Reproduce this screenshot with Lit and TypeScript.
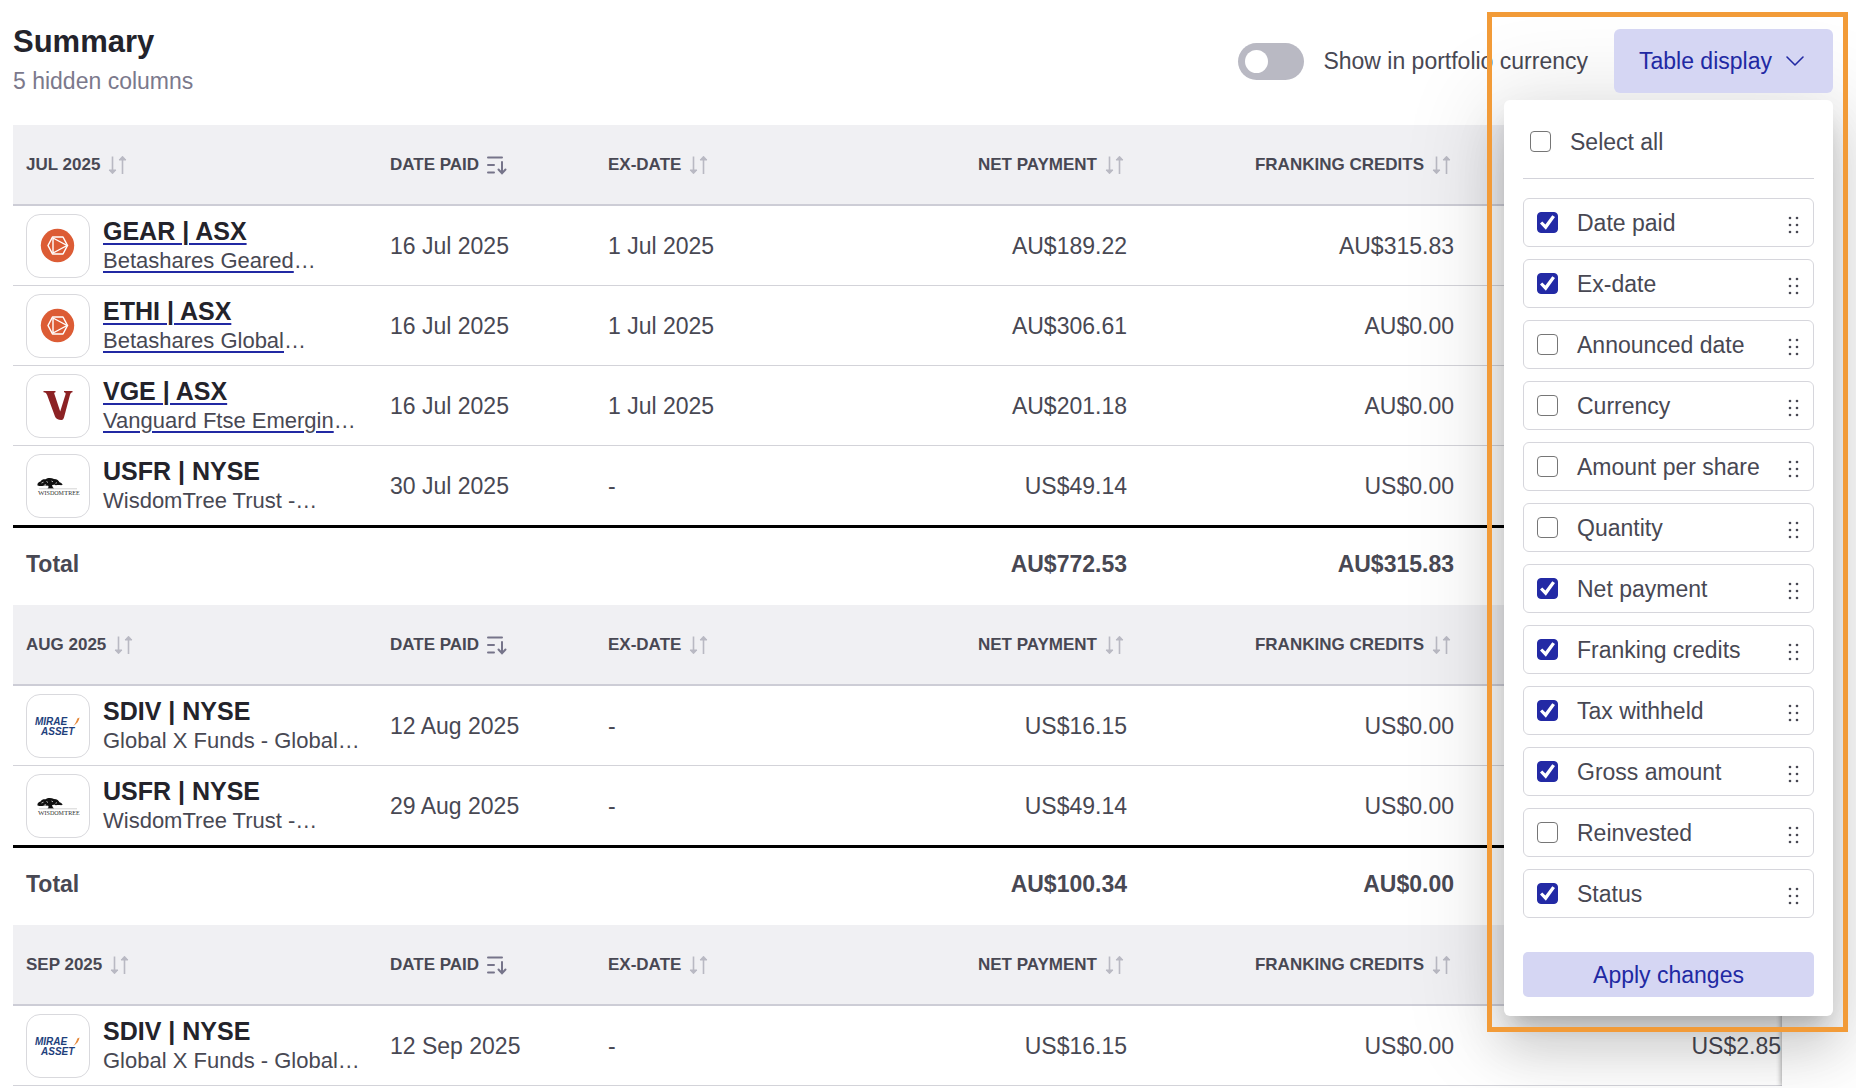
import { LitElement, html, css, svg } from "lit";
import { customElement, state } from "lit/decorators.js";

type Brand = "betashares" | "vanguard" | "wisdomtree" | "mirae";

interface Holding {
  brand: Brand;
  code: string;
  name: string;
  linked?: boolean;
  paid: string;
  exDate: string;
  net: string;
  franking: string;
  gross?: string;
}

interface Month {
  label: string;
  rows: Holding[];
  total?: { net: string; franking: string };
}

const MONTHS: Month[] = [
  {
    label: "JUL 2025",
    rows: [
      { brand: "betashares", code: "GEAR | ASX", name: "Betashares Geared", linked: true, paid: "16 Jul 2025", exDate: "1 Jul 2025", net: "AU$189.22", franking: "AU$315.83" },
      { brand: "betashares", code: "ETHI | ASX", name: "Betashares Global", linked: true, paid: "16 Jul 2025", exDate: "1 Jul 2025", net: "AU$306.61", franking: "AU$0.00" },
      { brand: "vanguard", code: "VGE | ASX", name: "Vanguard Ftse Emergin", linked: true, paid: "16 Jul 2025", exDate: "1 Jul 2025", net: "AU$201.18", franking: "AU$0.00" },
      { brand: "wisdomtree", code: "USFR | NYSE", name: "WisdomTree Trust -", paid: "30 Jul 2025", exDate: "-", net: "US$49.14", franking: "US$0.00" },
    ],
    total: { net: "AU$772.53", franking: "AU$315.83" },
  },
  {
    label: "AUG 2025",
    rows: [
      { brand: "mirae", code: "SDIV | NYSE", name: "Global X Funds - Global", paid: "12 Aug 2025", exDate: "-", net: "US$16.15", franking: "US$0.00" },
      { brand: "wisdomtree", code: "USFR | NYSE", name: "WisdomTree Trust -", paid: "29 Aug 2025", exDate: "-", net: "US$49.14", franking: "US$0.00" },
    ],
    total: { net: "AU$100.34", franking: "AU$0.00" },
  },
  {
    label: "SEP 2025",
    rows: [
      { brand: "mirae", code: "SDIV | NYSE", name: "Global X Funds - Global", paid: "12 Sep 2025", exDate: "-", net: "US$16.15", franking: "US$0.00", gross: "US$2.85" },
    ],
  },
];

const LOGOS: Record<Brand, unknown> = {
  betashares: svg`
    <circle cx="30.500" cy="30.500" r="16.700" fill="#dc5c35"/>
    <path d="M25.500 22h10.500L40.500 30.500l-4.500 8.500H25.500L21 30.500z" fill="none" stroke="#fff" stroke-width="1.500" stroke-linejoin="round"/>
    <path d="M26 22.500v16M26 23l14 7.500-14 7.500" fill="none" stroke="#fff" stroke-width="1.400"/>`,
  vanguard: svg`
    <path d="M16.500 16h12v1.200c-1.200.2-1.500.7-1.100 1.900l5.800 17.400 5.300-17c.4-1.400 0-2-1.500-2.300V16h8.500v1.200c-1.400.3-1.900.9-2.400 2.400L37 42.500c-.6 1.900-1.500 2.700-2.800 2.500-3-.3-5.400-1.200-6.200-3.500L20.200 20.300c-.8-2.100-1.500-2.900-3.700-3.100z" fill="#8c2224"/>`,
  wisdomtree: svg`
    <path d="M10.500 30.500c-.5-2 1-3.500 3-4 1-2 3-2.500 5-2.300 2-1.700 6-1.700 8.500-.2 3 .2 5 1.700 5.500 3.300 2 .6 3 1.800 3 2.700-2 .4-3-.3-5 0-2 .5-4-.5-5.500.2l.8 2 1.200 1.300h-6.500l1.200-1.500-.7-1.500c-1.500.5-3-.3-4.500.2-2 .8-4 .3-6-.2z" fill="#111"/>
    <path d="M14.500 28l2-.8M19.500 26.500l1.500 1M24.500 26l1.500.8M28.500 28.300l1.500-.6M17.500 29.800h1.600M26.500 30h1.400" stroke="#fff" stroke-width=".7"/>
    <path d="M12 33.800h38" stroke="#aaa" stroke-width=".5"/>
    <text x="11" y="40" font-family="Liberation Serif, serif" font-size="7" fill="#333">W<tspan font-size="6">ISDOM</tspan>T<tspan font-size="6">REE</tspan></text>`,
  mirae: svg`
    <text x="8" y="30" font-family="Liberation Sans, sans-serif" font-size="10" font-weight="700" font-style="italic" fill="#1e3f7c">MIRAE</text>
    <text x="14" y="40" font-family="Liberation Sans, sans-serif" font-size="10" font-weight="700" font-style="italic" fill="#1e3f7c">ASSET</text>
    <path d="M52.500 22.500c-.2 3-2.500 6.500-6.500 8.700 2.300-2.300 3.500-5 4.300-7.700z" fill="#e58a3c"/>`,
};

@customElement("app-root")
export class AppRoot extends LitElement {
  @state() private columns = [
    { label: "Date paid", on: true },
    { label: "Ex-date", on: true },
    { label: "Announced date", on: false },
    { label: "Currency", on: false },
    { label: "Amount per share", on: false },
    { label: "Quantity", on: false },
    { label: "Net payment", on: true },
    { label: "Franking credits", on: true },
    { label: "Tax withheld", on: true },
    { label: "Gross amount", on: true },
    { label: "Reinvested", on: false },
    { label: "Status", on: true },
  ];

  static styles = css`
    :host {
      display: block;
      height: 100vh;
      overflow: hidden;
      background: #fff;
      color: #484853;
      font-family: "Liberation Sans", Arial, sans-serif;
      font-size: 23px;
      line-height: 28px;
    }
    * { box-sizing: border-box; }
    button { font: inherit; border: 0; cursor: pointer; }
    .top {
      display: flex;
      justify-content: space-between;
      align-items: flex-start;
      height: 125px;
      padding: 24px 23px 0 13px;
    }
    h1 { margin: 0; font-size: 31px; line-height: 36px; font-weight: 700; color: #23232b; }
    .hidden-count { margin: 7px 0 0; color: #7b798c; }
    .actions { display: flex; align-items: center; gap: 26px; padding-top: 5px; }
    .toggle { display: flex; align-items: center; gap: 19px; }
    .switch {
      appearance: none;
      width: 66px;
      height: 37px;
      margin: 0;
      padding: 7px;
      border-radius: 19px;
      background: #b9b9c3;
    }
    .switch::before {
      content: "";
      display: block;
      width: 23px;
      height: 23px;
      border-radius: 50%;
      background: #fff;
    }
    .switch:checked::before { margin-left: auto; }
    .menu { position: relative; }
    .menu-button {
      position: relative;
      z-index: 3;
      display: flex;
      align-items: center;
      justify-content: space-between;
      width: 219px;
      height: 64px;
      padding: 0 28px 0 25px;
      border-radius: 6px;
      background: #d5d6f3;
      color: #2129a3;
    }
    .panel {
      position: absolute;
      z-index: 2;
      top: 71px;
      right: 0;
      width: 329px;
      padding: 19px;
      border-radius: 6px;
      background: #fff;
      box-shadow: 0 14px 20px -9px rgba(0, 0, 0, 0.2), 0 30px 48px 4px rgba(0, 0, 0, 0.12), 0 12px 90px 16px rgba(0, 0, 0, 0.12);
    }
    .panel::after {
      content: "";
      position: absolute;
      inset: -88px -15px -16px -17px;
      border: 5px solid #f29b38;
      pointer-events: none;
    }
    .all {
      display: flex;
      align-items: center;
      gap: 19px;
      height: 60px;
      padding: 0 7px 14px;
      border-bottom: 1px solid #d3d3da;
    }
    .list { display: grid; gap: 12px; margin: 19px 0 34px; padding: 0; list-style: none; }
    .item {
      display: flex;
      align-items: center;
      height: 49px;
      padding: 0 13px;
      border: 1px solid #d6d6dc;
      border-radius: 6px;
    }
    .item label { display: flex; flex: 1; align-items: center; gap: 19px; }
    .box {
      appearance: none;
      display: grid;
      place-items: center;
      width: 21px;
      height: 21px;
      margin: 0;
      border: 1px solid #767676;
      border-radius: 4px;
      background: #fff;
    }
    .box:checked { border-color: #232aa5; background: #232aa5; }
    .box:checked::before {
      content: "";
      width: 15px;
      height: 15px;
      background: #fff;
      clip-path: polygon(0 57%, 15% 43%, 36% 63%, 82% 2%, 100% 14%, 39% 98%);
    }
    .drag { display: flex; padding: 4px 0 0; background: none; color: #484853; }
    .apply { width: 100%; height: 45px; padding: 0; border-radius: 5px; background: #d5d6f3; color: #2129a3; }

    .report { display: flex; padding-left: 13px; }
    .scroller { flex: 1; min-width: 0; }
    .edge {
      position: relative;
      width: 74px;
      background: #fff;
      box-shadow: -1px 0 5px rgba(0, 0, 0, 0.35);
      clip-path: inset(0 0 0 -6px);
    }
    table { width: 100%; table-layout: fixed; border-spacing: 0; }
    .c-name { width: 364px; }
    .c-date { width: 218px; }
    .c-gross { width: 315px; }
    th, td { padding: 0 13px; text-align: left; font-weight: 400; white-space: nowrap; }
    .num { text-align: right; }
    .gross { padding-right: 1px; }
    .head th { height: 81px; border-bottom: 2px solid #cdcdd6; background: #f0f0f3; font-size: 17px; font-weight: 700; }
    .sort {
      display: inline-flex;
      align-items: center;
      gap: 4px;
      padding: 0;
      background: none;
      color: inherit;
      line-height: 24px;
    }
    .row td, .row th { height: 80px; border-bottom: 1px solid #d3d3d9; }
    .row.last td, .row.last th { height: 82px; border-bottom: 3px solid #000; }
    .total td, .total th { height: 77px; padding-bottom: 5px; font-weight: 700; }
    .holding { display: flex; align-items: center; gap: 13px; }
    .logo { flex: none; width: 64px; height: 64px; border: 1px solid #d9d9dd; border-radius: 14px; }
    .logo svg { display: block; }
    .names { min-width: 0; }
    .code { display: block; font-size: 25px; line-height: 29px; font-weight: 700; color: #23232b; text-decoration: none; }
    .name { display: block; font-size: 22px; line-height: 29px; }
    .name a { color: inherit; text-decoration: none; }
    a.code, .name a {
      text-decoration: underline #2129a3 2px;
      text-underline-offset: 3px;
    }
  `;

  private sortIcon(active = false) {
    return active
      ? html`<svg width="26" height="20" viewBox="0 0 26 20" fill="none" stroke="#76748a" stroke-width="2" stroke-linecap="round" aria-hidden="true">
          <path d="M5 2.500h14M5 10h6M5 17.500h6M19 7v11M15.500 14.500l3.500 3.800 3.500-3.800"/>
        </svg>`
      : html`<svg width="26" height="20" viewBox="0 0 26 20" fill="none" stroke="#b9b9c3" stroke-width="1.600" aria-hidden="true">
          <path d="M8.500 1.500v14M18.500 19V5"/>
          <path d="M5 15h7l-3.500 3.800zM15 5h7l-3.500-3.800z" fill="#b9b9c3" stroke-width="1" stroke-linejoin="round"/>
        </svg>`;
  }

  private toggleAll(on: boolean) {
    this.columns = this.columns.map((c) => ({ ...c, on }));
  }

  private toggleColumn(index: number) {
    this.columns = this.columns.map((c, i) => (i === index ? { ...c, on: !c.on } : c));
  }

  private renderHead(label: string) {
    return html`
      <tr class="head">
        <th scope="col"><button class="sort">${label} ${this.sortIcon()}</button></th>
        <th scope="col"><button class="sort">DATE PAID ${this.sortIcon(true)}</button></th>
        <th scope="col"><button class="sort">EX-DATE ${this.sortIcon()}</button></th>
        <th scope="col" class="num"><button class="sort">NET PAYMENT ${this.sortIcon()}</button></th>
        <th scope="col" class="num"><button class="sort">FRANKING CREDITS ${this.sortIcon()}</button></th>
        <th scope="col" aria-label="Gross amount"></th>
      </tr>`;
  }

  private renderRow(h: Holding, last: boolean) {
    return html`
      <tr class="row ${last ? "last" : ""}">
        <th scope="row">
          <div class="holding">
            <span class="logo"><svg width="62" height="62" viewBox="0 0 62 62" aria-hidden="true">${LOGOS[h.brand]}</svg></span>
            <div class="names">
              ${h.linked ? html`<a class="code" href="#">${h.code}</a>` : html`<span class="code">${h.code}</span>`}
              <span class="name">${h.linked ? html`<a href="#">${h.name}</a>` : h.name}…</span>
            </div>
          </div>
        </th>
        <td>${h.paid}</td>
        <td>${h.exDate}</td>
        <td class="num">${h.net}</td>
        <td class="num">${h.franking}</td>
        <td class="num gross">${h.gross ?? ""}</td>
      </tr>`;
  }

  private renderMonth(month: Month) {
    const total = month.total;
    return html`
      <tbody>
        ${this.renderHead(month.label)}
        ${month.rows.map((h, i) => this.renderRow(h, !!total && i === month.rows.length - 1))}
        ${total
          ? html`<tr class="total">
              <th scope="row">Total</th>
              <td></td>
              <td></td>
              <td class="num">${total.net}</td>
              <td class="num">${total.franking}</td>
              <td></td>
            </tr>`
          : ""}
      </tbody>`;
  }

  render() {
    return html`
      <header class="top">
        <div>
          <h1>Summary</h1>
          <p class="hidden-count">5 hidden columns</p>
        </div>
        <div class="actions">
          <label class="toggle"><input class="switch" type="checkbox" role="switch" />Show in portfolio currency</label>
          <div class="menu">
            <button class="menu-button" aria-expanded="true">
              Table display
              <svg width="20" height="12" viewBox="0 0 20 12" fill="none" stroke="currentColor" stroke-width="1.600" stroke-linecap="round" stroke-linejoin="round" aria-hidden="true"><path d="M2 2l8 8 8-8"/></svg>
            </button>
            <div class="panel">
              <label class="all">
                <input class="box" type="checkbox" @change=${(e: Event) => this.toggleAll((e.target as HTMLInputElement).checked)} />Select all
              </label>
              <ul class="list">
                ${this.columns.map(
                  (c, i) => html`<li class="item">
                    <label><input class="box" type="checkbox" .checked=${c.on} @change=${() => this.toggleColumn(i)} />${c.label}</label>
                    <button class="drag" aria-label="Reorder ${c.label}">
                      <svg width="12" height="18" viewBox="0 0 12 18" fill="currentColor" aria-hidden="true">
                        ${[2, 9, 16].map((y) => svg`<circle cx="2" cy=${y} r="1.300"/><circle cx="9" cy=${y} r="1.300"/>`)}
                      </svg>
                    </button>
                  </li>`
                )}
              </ul>
              <button class="apply">Apply changes</button>
            </div>
          </div>
        </div>
      </header>
      <div class="report">
        <div class="scroller">
          <table>
            <colgroup>
              <col class="c-name" /><col class="c-date" /><col class="c-date" /><col /><col /><col class="c-gross" />
            </colgroup>
            ${MONTHS.map((m) => this.renderMonth(m))}
          </table>
        </div>
        <div class="edge"></div>
      </div>
    `;
  }
}
